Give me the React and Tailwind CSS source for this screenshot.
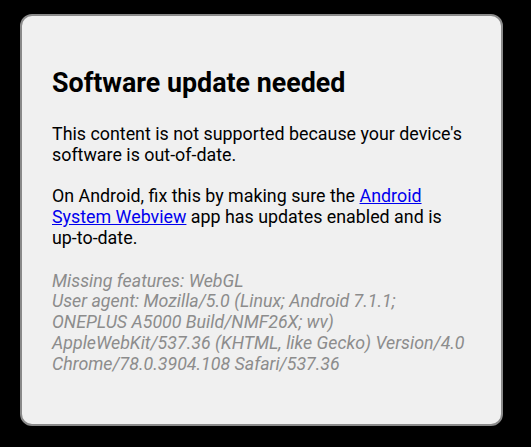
export default function App() {
  return (
    <div className="min-h-[447px] w-[531px] bg-black pl-[20px] pt-[14px] font-['Roboto',sans-serif]">
      <div className="h-[412px] w-[483px] rounded-[12px] border-2 border-[#8a8a8a] bg-[#f0f0f0] px-[30px] pt-[52px]">
        <h1 className="text-[26.8px] font-bold leading-[31px] text-black">Software update needed</h1>
        <p className="mt-[25px] text-[17.85px] leading-[20.7px] text-black">
          This content is not supported because your device's software is{' '}
          <span className="whitespace-nowrap">out-of-date.</span>
        </p>
        <p className="mt-[21px] text-[17.85px] leading-[20.7px] text-black">
          On Android, fix this by making sure the{' '}
          <a href="#" className="text-[#0000ee] underline">
            Android System Webview
          </a>{' '}
          app has updates enabled and is <span className="whitespace-nowrap">up-to-date.</span>
        </p>
        <p className="mt-[22px] text-[17.8px] italic leading-[20.8px] text-[#8c8c8c]">
          Missing features: WebGL
          <br />
          User agent: Mozilla/5.0 (Linux; Android 7.1.1; ONEPLUS A5000 Build/NMF26X; wv) AppleWebKit/537.36 (KHTML, like
          Gecko) Version/4.0 Chrome/78.0.3904.108 Safari/537.36
        </p>
      </div>
    </div>
  )
}
